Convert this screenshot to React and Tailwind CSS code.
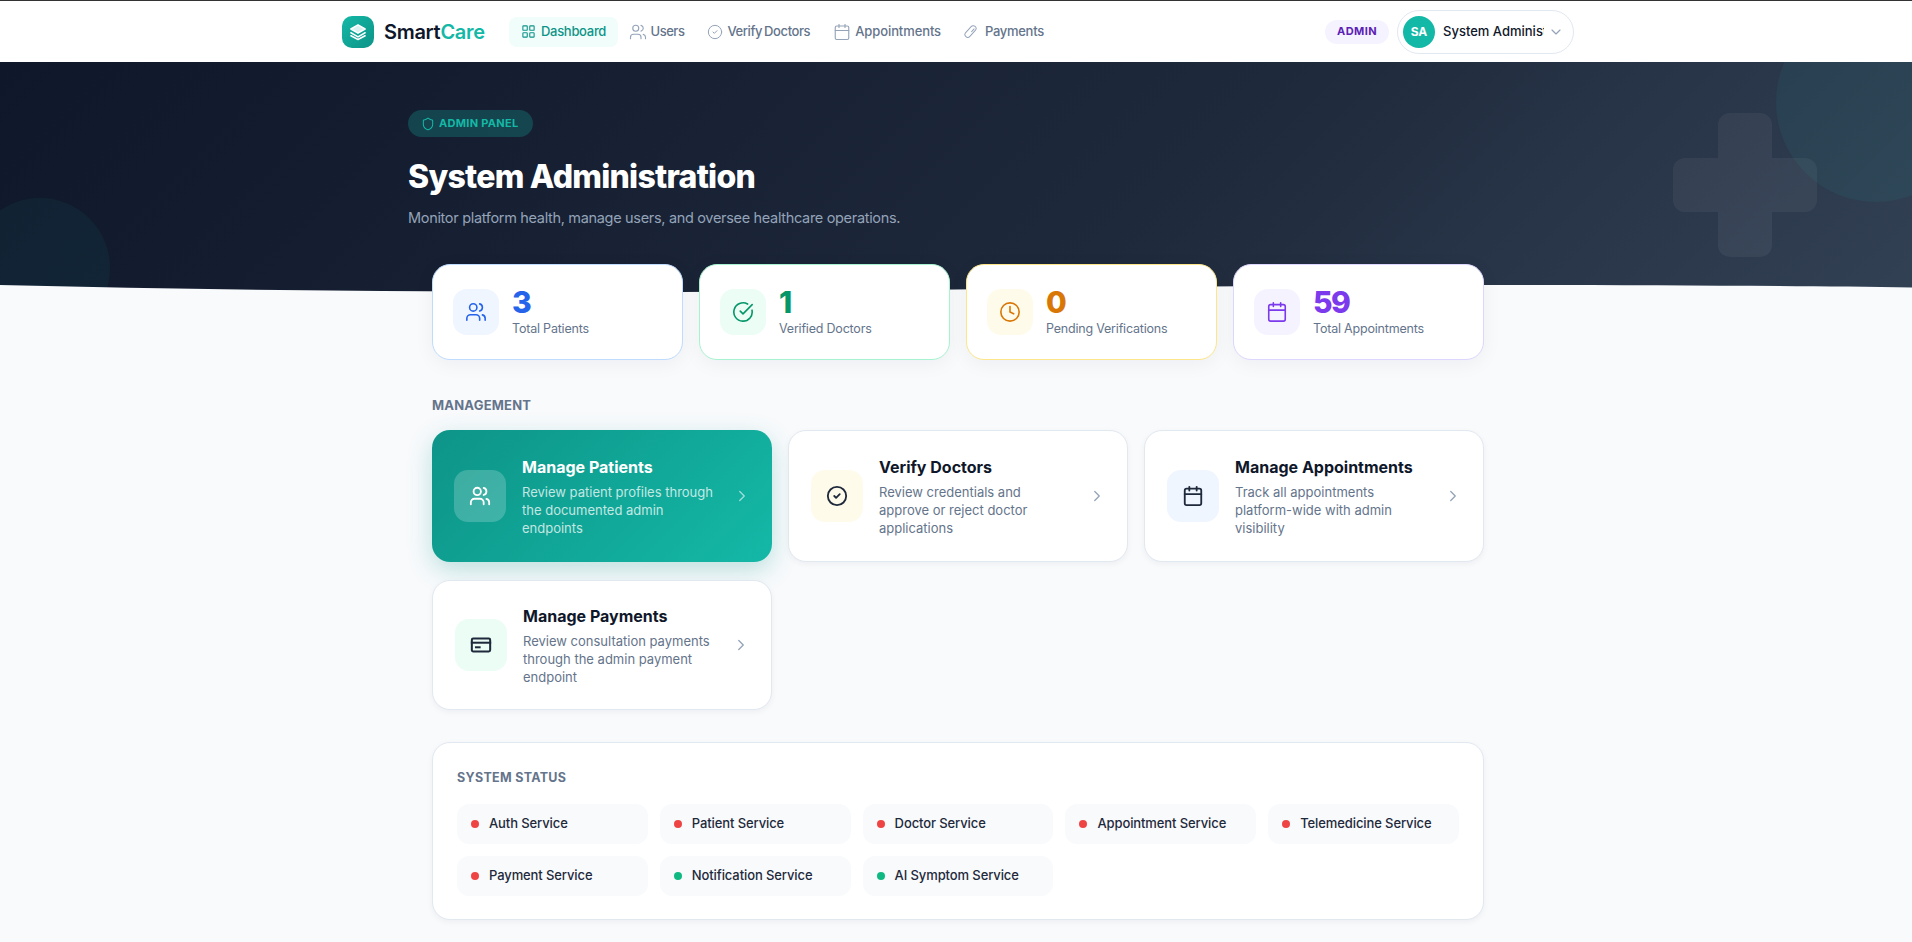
import {
  Calendar,
  ChevronDown,
  ChevronRight,
  CircleCheck,
  CircleCheckBig,
  Clock,
  LayoutGrid,
  Shield,
  Users,
} from "lucide-react";

function LogoIcon() {
  return (
    <svg width="18" height="18" viewBox="0 0 24 24" fill="none" stroke="#ffffff" strokeWidth="2" strokeLinecap="round" strokeLinejoin="round">
      <path d="M12 2.5 21.5 8 12 13.5 2.5 8Z" fill="#ffffff" fillOpacity="0.85" />
      <path d="M2.5 13 12 18.5 21.5 13" />
      <path d="M2.5 17 12 22 21.5 17" />
    </svg>
  );
}

function PaymentIcon({ size, className }) {
  return (
    <svg width={size} height={size} viewBox="0 0 24 24" fill="none" stroke="currentColor" strokeWidth="2.2" strokeLinecap="square" strokeLinejoin="round" className={className}>
      <rect x="2" y="5" width="20" height="14" rx="1.5" />
      <path d="M2 9.5h20" />
      <path d="M6.5 14.5h4" />
    </svg>
  );
}

function CapsuleIcon({ size, strokeWidth, className }) {
  return (
    <svg width={size} height={size} viewBox="0 0 24 24" fill="none" stroke="currentColor" strokeWidth={strokeWidth} strokeLinecap="round" className={className}>
      <g transform="rotate(42 12 12)">
        <rect x="7.5" y="1" width="9" height="22" rx="4.5" />
        <path d="M13.5 5v6" />
      </g>
    </svg>
  );
}

const navLinks = [
  { label: "Dashboard", icon: LayoutGrid, size: 15, active: true, textClass: "tracking-[-0.3px]", iconClass: "-mr-px" },
  { label: "Users", icon: Users, size: 18, iconClass: "-ml-[1.5px] -mr-[2px]", textClass: "tracking-[-0.5px]" },
  { label: "Verify Doctors", icon: CircleCheck, size: 16, iconClass: "-ml-px -mr-[2px]", textClass: "tracking-[-0.4px] [word-spacing:-1px]" },
  { label: "Appointments", icon: Calendar, size: 18, iconClass: "-ml-px -mr-[2px]", textClass: "tracking-[-0.1px]" },
  { label: "Payments", icon: CapsuleIcon, size: 15, iconClass: "-ml-[2px] mr-px", textClass: "tracking-[-0.3px]" },
];

const stats = [
  { value: 3, label: "Total Patients", icon: Users, border: "border-[#bfdbfe]", box: "bg-[#eff6ff]", text: "text-[#2563eb]" },
  { value: 1, label: "Verified Doctors", icon: CircleCheckBig, border: "border-[#a7f3d0]", box: "bg-[#ecfdf5]", text: "text-[#059669]" },
  { value: 0, label: "Pending Verifications", icon: Clock, border: "border-[#fde68a]", box: "bg-[#fffbeb]", text: "text-[#d97706]" },
  { value: 59, label: "Total Appointments", icon: Calendar, border: "border-[#ddd6fe]", box: "bg-[#f5f3ff]", text: "text-[#7c3aed]" },
];

const actions = [
  { title: "Manage Patients", lines: ["Review patient profiles through", "the documented admin", "endpoints"], icon: Users, active: true },
  { title: "Verify Doctors", lines: ["Review credentials and", "approve or reject doctor", "applications"], icon: CircleCheck, box: "bg-[#fffbeb]" },
  { title: "Manage Appointments", lines: ["Track all appointments", "platform-wide with admin", "visibility"], icon: Calendar, box: "bg-[#eff6ff]" },
  { title: "Manage Payments", lines: ["Review consultation payments", "through the admin payment", "endpoint"], icon: PaymentIcon, box: "bg-[#ecfdf5]" },
];

const services = [
  { name: "Auth Service", up: false },
  { name: "Patient Service", up: false },
  { name: "Doctor Service", up: false },
  { name: "Appointment Service", up: false },
  { name: "Telemedicine Service", up: false },
  { name: "Payment Service", up: false },
  { name: "Notification Service", up: true },
  { name: "AI Symptom Service", up: true },
];

function Navbar() {
  return (
    <nav className="h-[62px] border-t border-[#333333] bg-white">
      <div className="mx-auto flex h-full max-w-[1280px] items-center px-6">
        <div className="flex w-[143px] items-center gap-2.5">
          <div className="flex h-8 w-8 items-center justify-center rounded-[10px] bg-gradient-to-br from-[#14b8a6] to-[#0d9488]">
            <LogoIcon />
          </div>
          <span className="text-[20px] font-semibold tracking-[-0.3px] text-[#0f172a]">
            Smart<span className="text-[#14b8a6]">Care</span>
          </span>
        </div>
        <div className="ml-6 flex items-center">
          {navLinks.map((link) => (
            <a
              key={link.label}
              className={
                link.active
                  ? "flex h-[30px] items-center gap-1.5 rounded-lg bg-[#f0fdfa] px-3 text-[13px] font-medium text-[#0d9488]"
                  : "flex h-[30px] items-center gap-1.5 rounded-lg px-3 text-[13px] font-medium text-[#64748b]"
              }
            >
              <link.icon
                size={link.size}
                strokeWidth={link.active ? 1.75 : 1.5}
                className={(link.active ? "" : "text-[#94a3b8] ") + link.iconClass}
              />
              <span className={link.textClass}>{link.label}</span>
            </a>
          ))}
        </div>
        <div className="ml-auto flex items-center gap-2">
          <span className="flex h-6 w-16 items-center justify-center rounded-full bg-[#f5f3ff] text-[11px] font-bold tracking-[0.4px] text-[#5b21b6]">
            ADMIN
          </span>
          <button className="flex h-11 w-[177px] items-center rounded-full border border-[#e2e8f0] pl-[5px] pr-[9px]">
            <span className="flex h-8 w-8 shrink-0 items-center justify-center rounded-full bg-[#14b8a6] text-[12px] font-bold text-white">
              SA
            </span>
            <span className="ml-2 w-[101px] overflow-hidden whitespace-nowrap text-left text-[13px] font-medium text-[#0f172a]">
              System Administrator
            </span>
            <ChevronDown size={16} strokeWidth={1.75} className="ml-auto text-[#94a3b8]" />
          </button>
        </div>
      </div>
    </nav>
  );
}

function Hero() {
  return (
    <header className="relative h-[238px] overflow-hidden bg-[linear-gradient(135deg,#0f172a_0%,#1e293b_60%,#334155_100%)]">
      <div className="absolute -right-[60px] -top-[60px] h-[200px] w-[200px] rounded-full bg-[#14b8a6]/[0.08]" />
      <div className="absolute -left-[30px] top-[136px] h-[140px] w-[140px] rounded-full bg-[#14b8a6]/[0.06]" />
      <div className="absolute left-[1673px] top-[51px] h-[144px] w-[144px] opacity-5">
        <div className="absolute left-[45px] top-0 h-[144px] w-[54px] rounded-xl bg-white" />
        <div className="absolute left-0 top-[45px] h-[54px] w-[144px] rounded-xl bg-white" />
      </div>
      <div className="relative mx-auto max-w-[1100px] pt-12">
        <span className="inline-flex h-[27px] items-center gap-1 rounded-full bg-[#14b8a6]/25 pl-[13px] pr-3.5 text-[11px] font-bold tracking-[0.3px] text-[#14b8a6]">
          <Shield size={14} strokeWidth={1.75} />
          ADMIN PANEL
        </span>
        <h1 className="mt-5 text-[32px] font-extrabold leading-[40px] tracking-[-0.75px] text-white">
          System Administration
        </h1>
        <p className="mt-[10px] text-[14.5px] tracking-[-0.32px] text-[#94a3b8]">
          Monitor platform health, manage users, and oversee healthcare operations.
        </p>
      </div>
      <svg className="absolute bottom-0 left-0" width="1916" height="20" viewBox="0 0 1916 20" preserveAspectRatio="none">
        <path d="M0 5 C200 10 400 12 600 12 C900 12 1200 5 1490 5 C1650 5 1800 6 1916 7.5 L1916 20 L0 20 Z" fill="#f8fafc" />
      </svg>
    </header>
  );
}

function StatCard({ stat }) {
  const Icon = stat.icon;
  return (
    <div className={"flex h-[96px] items-center gap-[13px] rounded-[18px] border bg-white px-5 shadow-[0_4px_20px_rgba(15,23,42,0.05)] " + stat.border}>
      <div className={"flex h-[46px] w-[46px] items-center justify-center rounded-[14px] " + stat.box}>
        <Icon size={22} strokeWidth={1.75} className={stat.text} />
      </div>
      <div className="-mt-px">
        <div className={"text-[30px] font-extrabold leading-[32px] tracking-[-1.5px] " + stat.text}>{stat.value}</div>
        <div className="mt-[2px] text-[12.5px] leading-[18px] tracking-[-0.2px] text-[#64748b]">{stat.label}</div>
      </div>
    </div>
  );
}

function ActionCard({ action }) {
  const Icon = action.icon;
  return (
    <a
      className={
        action.active
          ? "flex items-center gap-4 rounded-[18px] bg-[linear-gradient(135deg,#0d9488,#14b8a6)] px-[22px] text-white shadow-[0_8px_24px_rgba(13,148,136,0.25)]"
          : "flex items-center gap-4 rounded-[18px] border border-[#e2e8f0] bg-white px-[22px] shadow-[0_2px_6px_rgba(15,23,42,0.05)]"
      }
    >
      <div className={"flex h-[52px] w-[52px] shrink-0 items-center justify-center rounded-[14px] " + (action.active ? "bg-white/20" : action.box)}>
        <Icon size={22} className={action.active ? "text-white" : "text-[#1e293b]"} />
      </div>
      <div className="min-w-0 flex-1">
        <div className={"text-[16px] font-bold leading-6 " + (action.active ? "text-white" : "text-[#0f172a]")}>{action.title}</div>
        <div className={"mt-1 text-[13px] leading-[18px] " + (action.active ? "text-white/75" : "text-[#64748b]")}>
          {action.lines.map((line) => (
            <div key={line} className="whitespace-nowrap">{line}</div>
          ))}
        </div>
      </div>
      <ChevronRight size={18} strokeWidth={1.75} className={"-mr-px " + (action.active ? "text-white/60" : "text-[#94a3b8]")} />
    </a>
  );
}

export default function App() {
  return (
    <div className="h-[942px] overflow-hidden bg-[#f8fafc] font-['Inter',sans-serif]">
      <div className="w-[1916px]">
        <Navbar />
        <Hero />
        <main className="relative mx-auto -mt-9 w-[1052px]">
          <div className="grid grid-cols-4 gap-4">
            {stats.map((stat) => (
              <StatCard key={stat.label} stat={stat} />
            ))}
          </div>
          <h2 className="mt-9 text-[13px] font-bold leading-[18px] tracking-[0.2px] text-[#64748b]">MANAGEMENT</h2>
          <div className="mt-4 grid grid-cols-3 grid-rows-[132px_130px] gap-x-4 gap-y-[18px]">
            {actions.map((action) => (
              <ActionCard key={action.title} action={action} />
            ))}
          </div>
          <section className="mt-8 rounded-[18px] border border-[#e2e8f0] bg-white px-6 pb-[23px] pt-[26px] shadow-[0_2px_6px_rgba(15,23,42,0.05)]">
            <h3 className="text-[12.5px] font-bold leading-[18px] tracking-[0.3px] text-[#64748b]">SYSTEM STATUS</h3>
            <div className="mt-[17px] grid grid-cols-5 gap-3">
              {services.map((service) => (
                <div key={service.name} className="flex h-10 items-center gap-2.5 rounded-xl bg-[#f8fafc] pl-3.5">
                  <span className={"h-2 w-2 rounded-full " + (service.up ? "bg-[#10b981]" : "bg-[#ef4444]")} />
                  <span className="text-[13px] font-medium tracking-[-0.1px] text-[#1e293b]">{service.name}</span>
                </div>
              ))}
            </div>
          </section>
        </main>
      </div>
    </div>
  );
}
